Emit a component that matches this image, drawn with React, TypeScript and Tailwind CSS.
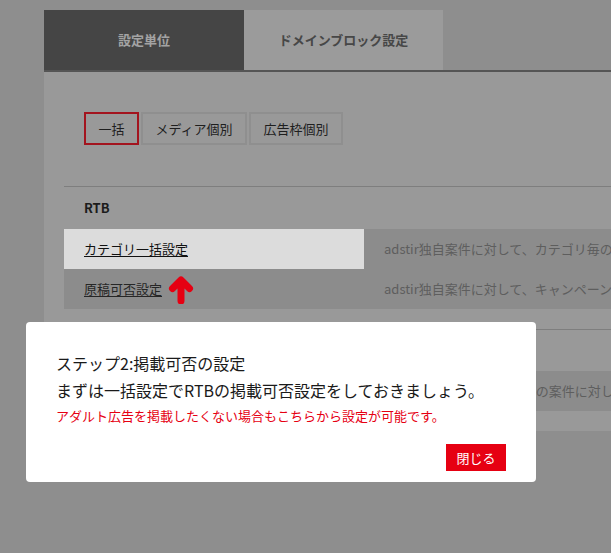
import React from "react";

const rows = [
  {
    label: "カテゴリ一括設定",
    desc: "adstir独自案件に対して、カテゴリ毎の掲載可否を一括で設定できます。",
    active: true,
  },
  {
    label: "原稿可否設定",
    desc: "adstir独自案件に対して、キャンペーン毎の原稿の掲載可否を設定できます。",
    arrow: true,
  },
];

const Arrow = () => (
  <svg width="26" height="28" viewBox="0 0 26 28" className="ml-[6px] mt-[2px]">
    <path
      d="M13 25 V7 M4.5 12.5 L13 4 L21.5 12.5"
      fill="none"
      stroke="#e60012"
      strokeWidth="7"
      strokeLinecap="round"
      strokeLinejoin="round"
    />
  </svg>
);

const App = () => {
  return (
    <div className="relative w-[611px] h-[553px] overflow-hidden bg-[#8e8e8e] font-['Noto_Sans_CJK_JP','Noto_Sans',sans-serif]">
      <div className="pl-[44px] pt-[10px] w-[900px]">
        {/* Tabs */}
        <div className="flex border-b-2 border-[#555555]">
          <div className="w-[200px] h-[60px] flex items-center justify-center bg-[#454545] text-[13px] font-bold text-[#a3a3a3]">
            設定単位
          </div>
          <div className="w-[199px] h-[60px] flex items-center justify-center bg-[#9b9b9b] text-[13px] font-bold text-[#474747]">
            ドメインブロック設定
          </div>
        </div>

        {/* Panel */}
        <div className="bg-[#999999] pt-[40px] pb-[20px] pl-[20px]">
          <div className="flex gap-[2px] pl-[20px] text-[13px] text-[#1e1e1e]">
            <button className="h-[33px] w-[55px] border-2 border-[#a3141e]">一括</button>
            <button className="h-[33px] w-[106px] border-2 border-[#8f8f8f]">メディア個別</button>
            <button className="h-[33px] w-[94px] border-2 border-[#8f8f8f]">広告枠個別</button>
          </div>

          <div className="mt-[41px] border-t border-[#7e7e7e]">
            <div className="h-[42px] flex items-center pl-[20px] text-[13px] font-bold text-[#1c1c1c]">RTB</div>
            {rows.map((row) => (
              <div key={row.label} className="flex h-[40px] bg-[#8c8c8c] text-[13px]">
                <div
                  className={`w-[300px] flex items-center pl-[20px] ${row.active ? "bg-[#dcdcdc] text-[#111111]" : "text-[#262626]"}`}
                >
                  <span className="underline underline-offset-2">{row.label}</span>
                  {row.arrow && <Arrow />}
                </div>
                <div className="flex items-center pl-[20px] text-[#5e5e5e] whitespace-nowrap">{row.desc}</div>
              </div>
            ))}
          </div>

          <div className="mt-[20px] border-t border-[#7e7e7e]">
            <div className="h-[41px] flex items-center pl-[20px] text-[13px] font-bold text-[#1c1c1c]">ネイティブ</div>
            <div className="flex h-[40px] bg-[#8c8c8c] text-[13px]">
              <div className="w-[300px] flex items-center pl-[20px] text-[#262626]">
                <span className="underline underline-offset-2">カテゴリ一括設定</span>
              </div>
              <div className="flex items-center pl-[20px] text-[#5e5e5e] whitespace-nowrap">
                adstir独自案件以外の全ての案件に対して、カテゴリ毎の掲載可否を設定できます。
              </div>
            </div>
          </div>
        </div>
      </div>

      {/* Step modal */}
      <div className="absolute left-[26px] top-[322px] w-[510px] h-[160px] bg-white rounded-[4px] pt-[28px] px-[30px]">
        <p className="text-[16px] leading-[27px] text-[#1a1a1a]">ステップ2:掲載可否の設定</p>
        <p className="text-[16px] leading-[27px] text-[#1a1a1a]">まずは一括設定でRTBの掲載可否設定をしておきましょう。</p>
        <p className="text-[13px] leading-[24px] text-[#e60012]">
          アダルト広告を掲載したくない場合もこちらから設定が可能です。
        </p>
        <div className="flex justify-end mt-[16px]">
          <button className="w-[60px] h-[27px] bg-[#e60012] text-white text-[13px]">閉じる</button>
        </div>
      </div>
    </div>
  );
};

export default App;
